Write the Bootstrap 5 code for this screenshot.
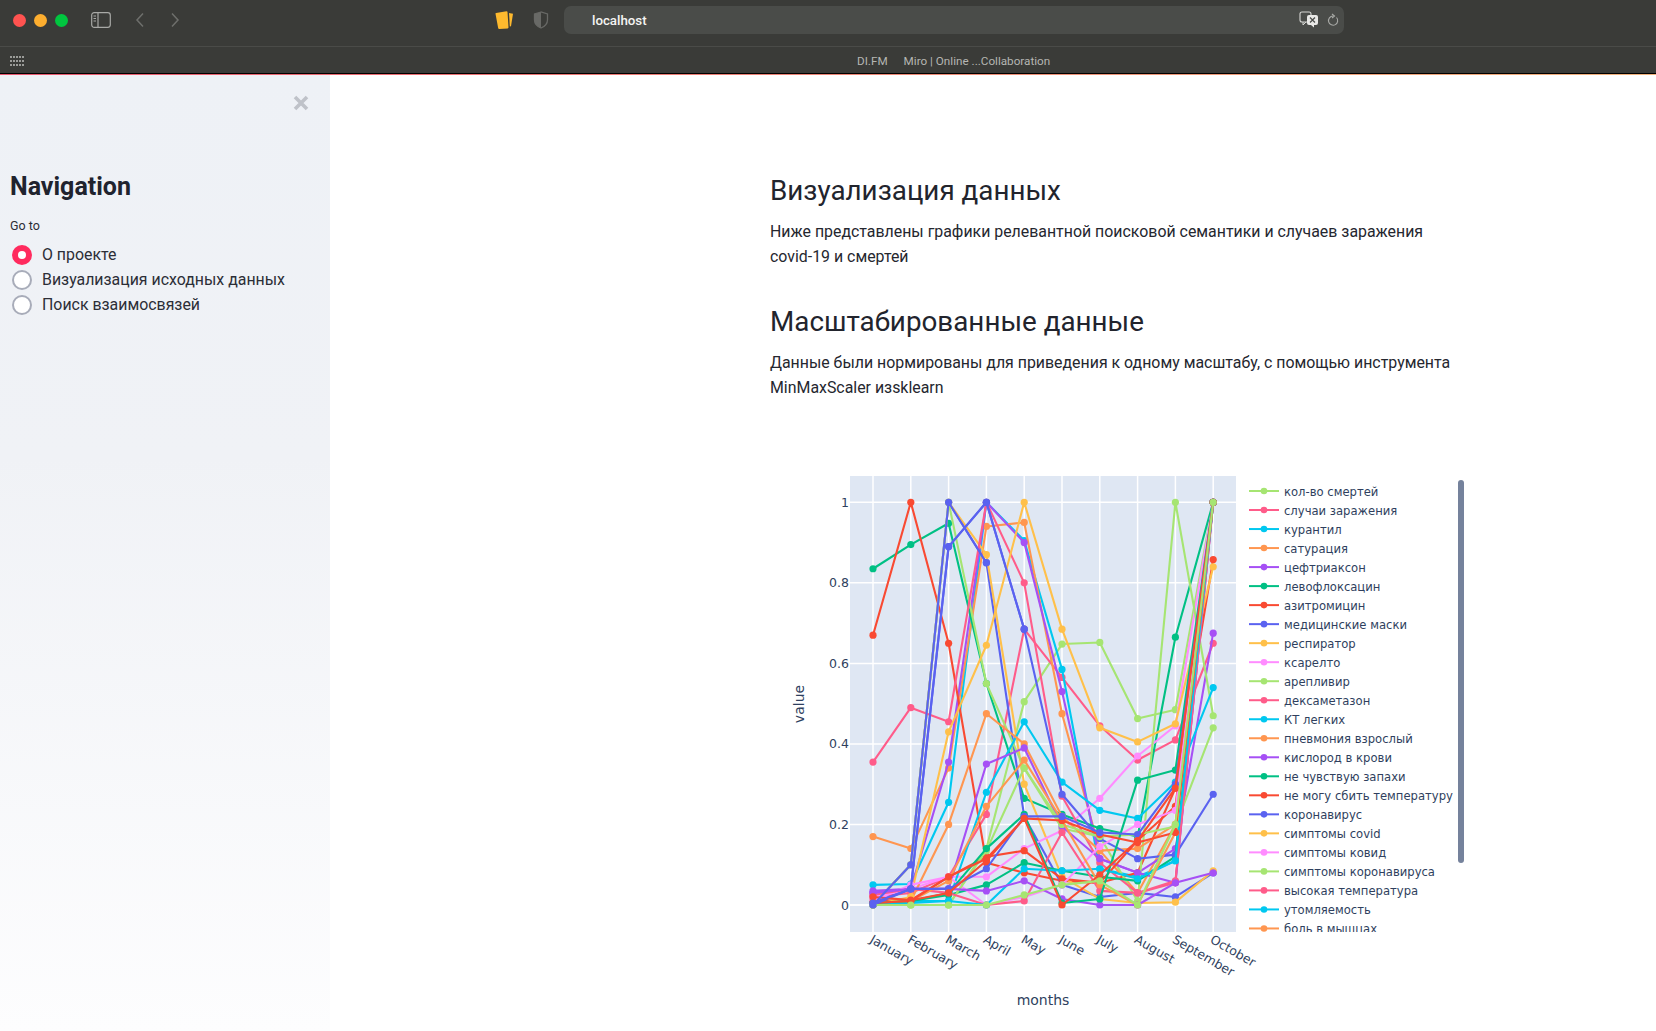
<!DOCTYPE html>
<html lang="ru"><head><meta charset="utf-8"><title>localhost</title>
<link href="https://cdn.jsdelivr.net/npm/bootstrap@5.3.0/dist/css/bootstrap.min.css" rel="stylesheet">
<style>
html,body{height:1031px;overflow:hidden;background:#fff}
body{font-family:"Roboto","Liberation Sans",sans-serif;color:#24262f}
.topbar{height:46px;background:#3a3b38;padding:0 0 6px 13px}
.dot{width:13px;height:13px;border-radius:50%}
.d-red{background:#ff5350}.d-yel{background:#fdae2f}.d-grn{background:#00c63f}
.sidetoggle{margin-left:23px}
.navback{margin-left:23px}
.navfwd{margin-left:23px}
.urlbox{position:absolute;left:564px;width:780px;top:6px;height:28px;background:#4a4c49;border-radius:7px;color:#f4f4f2;font-size:13.300px;font-weight:500;padding-left:28px;line-height:29px}
.urlicons{position:absolute;right:5px;top:5px}
.favbar{height:28px;background:#3a3b38;border-top:1px solid #4a4b48;border-bottom:1px solid #000;font-size:11.700px;color:#b5b6b3;position:relative}
.favlinks{position:absolute;left:857px;top:7px;line-height:15px;gap:16px}
.stripe{height:1px;background:linear-gradient(90deg,#e8566e,#f0b27c)}
.shell{height:956px}
.sidepane{width:330px;flex:none;background:linear-gradient(180deg,#eef1f6 0%,#f0f2f6 40%,#fdfdfe 100%);padding:0 10px;position:relative}
.closer{position:absolute;left:293px;top:20px}
.navhead{font-size:25px;font-weight:700;margin:92px 0 0;line-height:40px;color:#20232e}
.gotolabel{font-size:12.500px;margin:9px 0 6px;line-height:20px;color:#2b2d36}
.radiorow{min-height:25px;display:flex;align-items:center;gap:10px;padding:0;margin:0;font-size:15.900px;line-height:25px;color:#2c2e37}
.radiorow .form-check-input{width:20px;height:20px;margin:0 0 0 2px;float:none;border:2px solid #a8acb9;background-color:#fff}
.radiorow .form-check-input:checked{background-color:#ff2b5e;border-color:#ff2b5e}
.mainpane{padding:96px 0 0 440px;flex:1;min-width:0}
.mainpane h2{font-size:27.800px;font-weight:400;line-height:40px;margin:0 0 8px;color:#22242d}
.mainpane p{font-size:15.900px;line-height:25px;margin:0 0 33px;width:690px;color:#25272f}
.chartsvg{display:block;margin-top:45px}
.chartsvg text{font-family:"DejaVu Sans",Verdana,sans-serif;fill:#2f3f5e}
</style></head>
<body>
<div class="topbar d-flex align-items-center position-relative">
  <div class="d-flex gap-2 align-items-center"><span class="dot d-red"></span><span class="dot d-yel"></span><span class="dot d-grn"></span></div>
  <svg class="sidetoggle" width="20" height="16" viewBox="0 0 20 16" fill="none" stroke="#a8a9a6" stroke-width="1.2"><rect x=".7" y=".7" width="18.6" height="14.6" rx="2.5"/><path d="M7 1v14" /><path d="M2.5 4h2.5M2.5 6.5h2.5M2.5 9h2.5" stroke-width="1"/></svg>
  <svg class="navback" width="12" height="16" viewBox="0 0 12 16" fill="none" stroke="#6e6f6c" stroke-width="1.5"><path d="M9 1.500 3 8l6 6.500"/></svg>
  <svg class="navfwd" width="12" height="16" viewBox="0 0 12 16" fill="none" stroke="#6e6f6c" stroke-width="1.5"><path d="m3 1.500 6 6.500-6 6.500"/></svg>
  <svg class="position-absolute" style="left:494px;top:10px" width="20" height="20" viewBox="0 0 20 20"><path d="M15 3l4 .8-2 12.400-1.200.2z" fill="#fdb92e"/><path d="M2 3 12.500 1.300c.6 0 1 .3 1 .8l1 15.500c0 .5-.3.800-.8.900l-8.500.6c-.5 0-.9-.3-1-.8L1.500 3.800c0-.4.100-.7.500-.8z" fill="#fdb92e"/></svg>
  <svg class="position-absolute" style="left:533px;top:11px" width="16" height="18" viewBox="0 0 16 18"><path d="M8 1 1.500 3v6c0 4 3 6.500 6.500 8 3.500-1.500 6.500-4 6.500-8V3z" fill="none" stroke="#686966" stroke-width="1.300"/><path d="M8 1 1.500 3v6c0 4 3 6.500 6.500 8z" fill="#686966"/></svg>
  <div class="urlbox">localhost
    <span class="urlicons d-flex gap-2 align-items-center">
      <svg width="20" height="17" viewBox="0 0 20 17"><rect x="1" y="1" width="11" height="10" rx="2" fill="none" stroke="#d5d6d3" stroke-width="1.100"/><path d="M4 11v3l3-3" fill="none" stroke="#d5d6d3"/><rect x="8" y="4" width="11" height="10" rx="2" fill="#e9e9e7"/><path d="M15 14v2.500l-3-2.500z" fill="#e9e9e7"/><path d="m11 6.500 5 5m0-5-5 5" stroke="#4a4c49" stroke-width="1.200"/></svg>
      <svg width="12" height="14" viewBox="0 0 12 14" fill="none" stroke="#a9aaa7" stroke-width="1.100"><path d="M9.500 4.500A4.600 4.600 0 1 1 6 3"/><path d="M5 1l2.500 2L5 5"/></svg>
    </span>
  </div>
</div>
<div class="favbar">
  <svg class="position-absolute" style="left:10px;top:9px" width="14" height="11" viewBox="0 0 14 11" fill="#9b9c99"><path d="M0 0h2v2H0zM3 0h2v2H3zM6 0h2v2H6zM9 0h2v2H9zM12 0h2v2h-2zM0 4h2v2H0zM3 4h2v2H3zM6 4h2v2H6zM9 4h2v2H9zM12 4h2v2h-2zM0 8h2v2H0zM3 8h2v2H3zM6 8h2v2H6zM9 8h2v2H9zM12 8h2v2h-2z"/></svg>
  <div class="favlinks d-flex"><span>DI.FM</span><span>Miro | Online ...Collaboration</span></div>
</div>
<div class="stripe"></div>
<div class="shell d-flex">
  <aside class="sidepane">
    <svg class="closer" width="16" height="16" viewBox="0 0 16 16"><path d="m2 2 12 12M14 2 2 14" stroke="#bfc2c9" stroke-width="3.600"/></svg>
    <h1 class="navhead">Navigation</h1>
    <div class="gotolabel">Go to</div>
    <label class="radiorow form-check"><input class="form-check-input" type="radio" name="pg" checked><span>О проекте</span></label>
    <label class="radiorow form-check"><input class="form-check-input" type="radio" name="pg"><span>Визуализация исходных данных</span></label>
    <label class="radiorow form-check"><input class="form-check-input" type="radio" name="pg"><span>Поиск взаимосвязей</span></label>
  </aside>
  <main class="mainpane">
    <h2>Визуализация данных</h2>
    <p>Ниже представлены графики релевантной поисковой семантики и случаев заражения covid-19 и смертей</p>
    <h2>Масштабированные данные</h2>
    <p>Данные были нормированы для приведения к одному масштабу, с помощью инструмента MinMaxScaler изsklearn</p>
    <svg id="chart" class="chartsvg" width="720" height="600" viewBox="770 445 720 600" xmlns="http://www.w3.org/2000/svg"></svg>
  </main>
</div>
<script>
const C=["#a6e572","#ff5c8a","#00c8f0","#ff9650","#a650f5","#00c084","#f94a32","#5a62f0","#ffc04a","#ff8cff"];
const N=["кол-во смертей","случаи заражения","курантил","сатурация","цефтриаксон","левофлоксацин","азитромицин","медицинские маски","респиратор","ксарелто","арепливир","дексаметазон","КТ легких","пневмония взрослый","кислород в крови","не чувствую запахи","не могу сбить температуру","коронавирус","симптомы covid","симптомы ковид","симптомы коронавируса","высокая температура","утомляемость","боль в мышцах"];
const D=[
[0,0,0,.14,.505,.648,.652,.463,.485,1],
[.02,.03,.07,.225,.685,.565,.445,.36,.41,.65],
[.05,.052,.255,1,.905,.585,.09,.07,.11,1],
[.17,.14,.34,.94,.95,.475,.135,.03,.2,1],
[.03,.04,.355,1,.9,.53,.115,.08,.14,.675],
[.835,.895,.948,.55,.265,.225,.19,.17,.665,1],
[.67,1,.65,.105,.08,.06,.055,.08,.29,.858],
[0,.1,1,.85,.22,.05,.02,.03,.02,.08],
[0,.1,1,.87,.3,.07,.015,.005,.007,.085],
[.02,.04,.07,.07,.14,.185,.265,.37,.445,1],
[0,.1,1,.55,.34,.19,.17,.01,1,.47],
[.355,.49,.455,1,.8,.27,.105,.03,.055,1],
[.005,.01,.01,.28,.455,.305,.235,.215,.305,.54],
[0,.01,.2,.475,.4,.22,.135,.14,.2,1],
[.035,.04,.04,.35,.39,.195,.115,.08,.055,1],
[.005,.01,.025,.05,.105,.085,.07,.06,.12,1],
[.01,.012,.07,.12,.135,.065,.055,.16,.245,1],
[.005,.04,.89,1,.685,.275,.165,.115,.125,.275],
[0,.02,.43,.645,1,.685,.44,.405,.45,.84],
[.01,.05,.07,0,.02,.05,.145,.2,.235,1],
[0,0,0,.135,.34,.2,.17,.175,.195,.44],
[.025,.04,.03,0,.01,.18,.035,.03,.06,1],
[.005,.005,.01,0,.09,.085,.09,.065,.11,1],
[.005,.01,.06,.245,.36,.21,.05,0,.18,1],
[.03,.04,.04,.035,.06,.015,0,0,.055,.08],
[.005,.01,.03,.14,.225,.005,.015,.31,.335,1],
[.005,.01,.07,.115,.215,.21,.175,.155,.18,1],
[0,.04,.04,.09,.22,.22,.18,.175,.3,1],
[.02,.012,.03,.11,.215,0,.075,.16,.29,1],
[0,0,0,0,.025,.05,.06,0,.2,1],
[0,.1,1,.85],
[.005,.04,.89,1,.685]];
const CI=k=>k==28?6:k==29?0:k>=30?7:k%10;
const M=["January","February","March","April","May","June","July","August","September","October"];
const X=i=>873+i*37.8,Y=v=>905-v*402.7;
let s='<defs><clipPath id="lg"><rect x="1240" y="480" width="225" height="452"/></clipPath></defs>';
s+='<rect x="850" y="476" width="386" height="456" fill="#dfe7f3"/>';
M.forEach((m,i)=>{s+=`<path d="M${X(i)} 476V932" stroke="#fff" stroke-width="1.500"/>`;});
[0,.2,.4,.6,.8,1].forEach(v=>{s+=`<path d="M850 ${Y(v)}H1236" stroke="#fff" stroke-width="${v?1.5:2}"/>`;
 s+=`<text x="849" y="${Y(v)+4.500}" text-anchor="end" font-size="12.500">${v}</text>`;});
D.forEach((d,k)=>{const c=C[CI(k)];
 s+=`<polyline points="${d.map((v,i)=>X(i)+','+Y(v)).join(' ')}" fill="none" stroke="${c}" stroke-width="2.100" stroke-linejoin="round"/>`;
 d.forEach((v,i)=>{s+=`<circle cx="${X(i)}" cy="${Y(v)}" r="3.600" fill="${c}"/>`;});});
M.forEach((m,i)=>{const x=X(i)-4;s+=`<text transform="translate(${x} 942) rotate(30)" font-size="12.500">${m}</text>`;});
s+='<text transform="translate(804 704) rotate(-90)" text-anchor="middle" font-size="14">value</text>';
s+='<text x="1043" y="1005" text-anchor="middle" font-size="14">months</text>';
s+='<g clip-path="url(#lg)">';
N.forEach((n,i)=>{const y=491+i*19.02,c=C[i%10];
 s+=`<path d="M1249 ${y}h30" stroke="${c}" stroke-width="2"/><circle cx="1264" cy="${y}" r="3.300" fill="${c}"/><text x="1284" y="${y+4.500}" font-size="11.600">${n}</text>`;});
s+='</g><rect x="1458" y="480" width="6" height="383" rx="3" fill="#75829c"/>';
document.getElementById('chart').innerHTML=s;
</script>
<script src="https://cdn.jsdelivr.net/npm/bootstrap@5.3.0/dist/js/bootstrap.bundle.min.js"></script>
</body></html>
